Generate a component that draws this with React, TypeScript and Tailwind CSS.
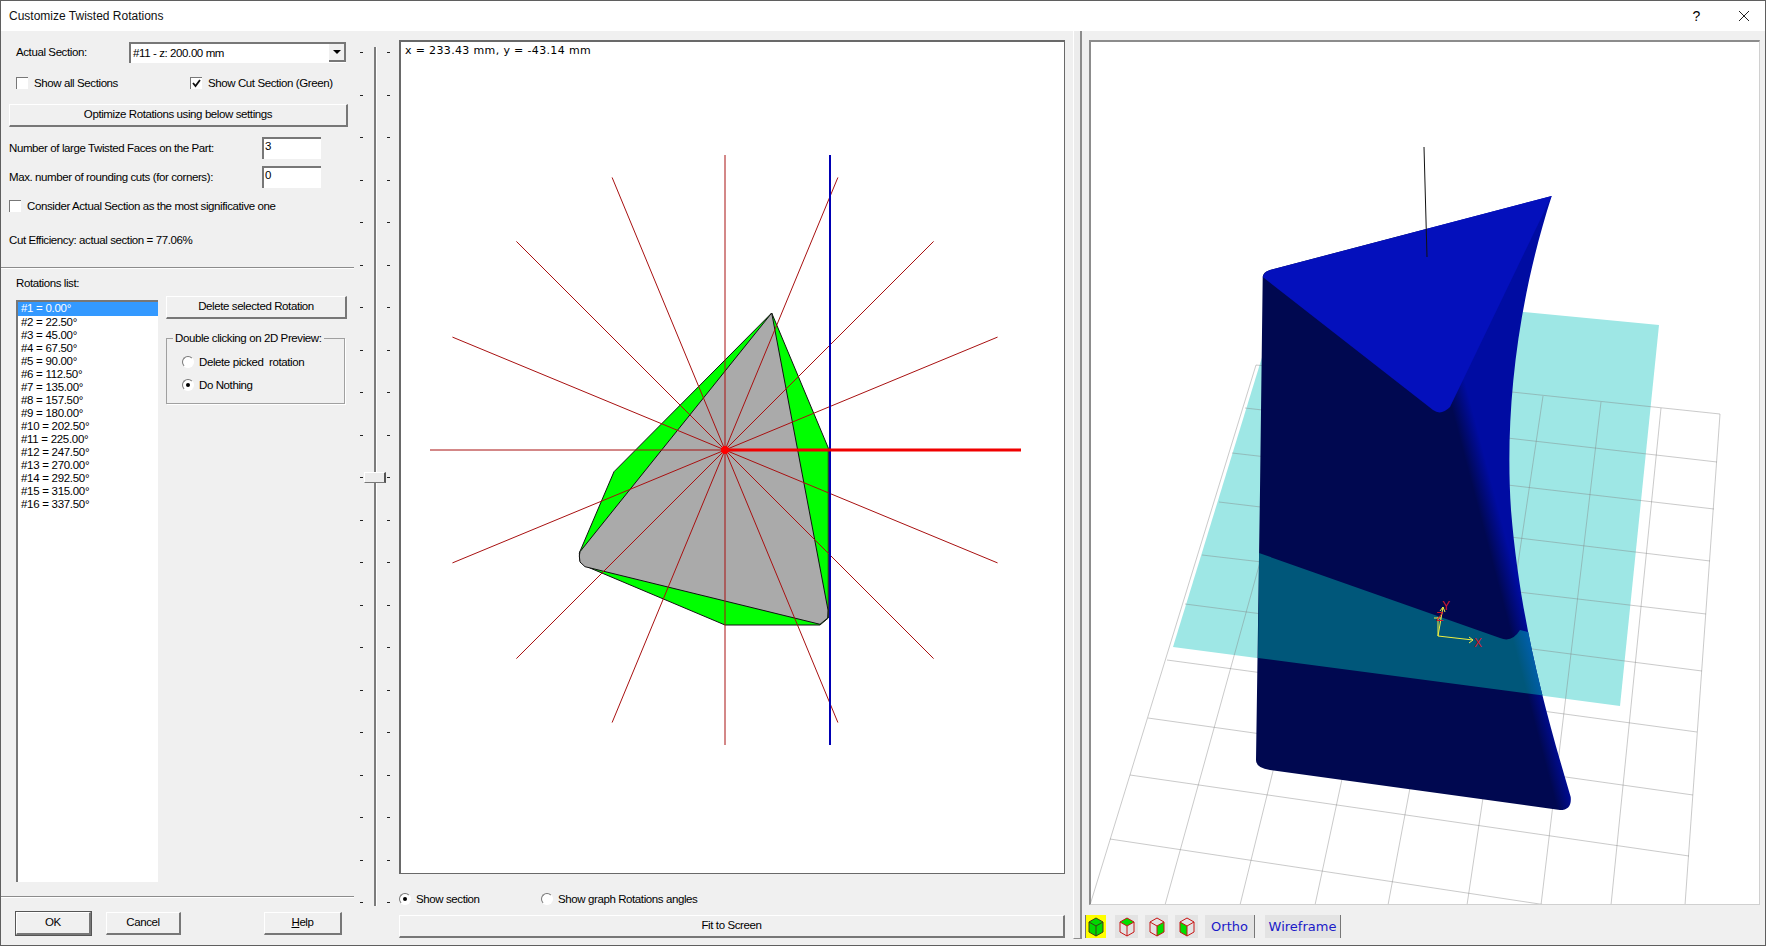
import React from 'react';

const rotations = ['0.00', '22.50', '45.00', '67.50', '90.00', '112.50', '135.00', '157.50', '180.00', '202.50', '225.00', '247.50', '270.00', '292.50', '315.00', '337.50'];
const ticks = Array.from({ length: 21 }, (_, i) => i);

// ends of the grid lines, read off the picture
const gridCols = [
  [1256, 365, 1090, 905], [1313, 371, 1165, 905], [1370, 377, 1240, 905], [1427, 383, 1315, 905], [1485, 389, 1388, 905],
  [1543, 396, 1467, 905], [1601, 402, 1541, 905], [1661, 408, 1611, 905], [1720, 414, 1685, 905],
];
const gridRows = [
  [1256, 365, 1720, 414], [1245, 408, 1717, 462], [1232, 453, 1714, 509], [1219, 502, 1710, 561], [1202, 555, 1706, 614],
  [1185, 604, 1702, 671], [1167, 660, 1697, 732], [1148, 718, 1693, 795], [1130, 775, 1689, 856], [1110, 839, 1685, 926],
];

function Tick() {
  return <div className="w-[3px] h-[1px] bg-[#222]" />;
}

function Btn({ label, className }: { label: React.ReactNode; className: string }) {
  return (
    <button className={`flex items-center justify-center bg-[#f0f0f0] border-t border-l border-white border-r-2 border-b-2 border-r-[#777] border-b-[#777] leading-none text-black ${className}`}>
      {label}
    </button>
  );
}

function Check({ checked, label, className }: { checked?: boolean; label: string; className?: string }) {
  return (
    <div className={`flex items-center h-[12px] ${className ?? ''}`}>
      <div className="w-[12px] h-[12px] bg-white border-t border-l border-t-[#777] border-l-[#777] shrink-0 flex items-center justify-center">
        {checked && (
          <svg width="9" height="9" viewBox="0 0 9 9">
            <path d="M1 4 L3.5 7 L8 1" fill="none" stroke="#111" strokeWidth="1.8" />
          </svg>
        )}
      </div>
      <span className="ml-[6px] whitespace-nowrap">{label}</span>
    </div>
  );
}

function Radio({ checked, label, className }: { checked?: boolean; label: string; className?: string }) {
  return (
    <div className={`flex items-center h-[12px] ${className ?? ''}`}>
      <div className="w-[12px] h-[12px] rounded-full bg-white border border-t-[#777] border-l-[#777] border-r-white border-b-white shrink-0 flex items-center justify-center">
        {checked && <div className="w-[4px] h-[4px] rounded-full bg-black" />}
      </div>
      <span className="ml-[5px] whitespace-pre">{label}</span>
    </div>
  );
}

function Cube({ kind }: { kind: 'all' | 'top' | 'right' | 'left' }) {
  const line = kind === 'all' ? '#3c3c1c' : '#c81414';
  return (
    <svg width="16" height="20" viewBox="0 0 16 20">
      <path d="M8 1 L15 5 L15 15 L8 19 L1 15 L1 5 Z" fill={kind === 'all' ? '#00d800' : 'none'} />
      {kind === 'top' && <path d="M8 1 L15 5 L8 9 L1 5 Z" fill="#00e000" />}
      {kind === 'right' && <path d="M15 5 L15 15 L8 19 L8 9 Z" fill="#00e000" />}
      {kind === 'left' && <path d="M1 5 L8 9 L8 19 L1 15 Z" fill="#00e000" />}
      <path d="M8 1 L15 5 L15 15 L8 19 L1 15 L1 5 Z M1 5 L8 9 L15 5 M8 9 L8 19" fill="none" stroke={line} strokeWidth="1" />
    </svg>
  );
}

function Section() {
  const cx = 725;
  const cy = 450;
  const r = 295;
  return (
    <svg className="block" width="663" height="831" viewBox="401 42 663 831">
      <path d="M771.7 313 L828.3 448 L828.3 618 L820 625 L725 625 L590 568 L580 561 L579.3 553 L614 471.7 Z" fill="#00ff00" stroke="#111" strokeWidth="1" />
      <path d="M771.7 313 L828 610 L827.7 618 L820 624.3 L585 566.7 L580 562 L579.3 556 L580 551.7 Z" fill="#aaaaaa" stroke="#111" strokeWidth="1" />
      {rotations.map((_, i) => {
        const a = (i * 22.5 * Math.PI) / 180;
        return <line key={i} x1={cx} y1={cy} x2={cx + r * Math.cos(a)} y2={cy - r * Math.sin(a)} stroke="#a81010" strokeWidth="1" />;
      })}
      <line x1="830" y1="155" x2="830" y2="745" stroke="#0000b4" strokeWidth="2" />
      <line x1={cx} y1={cy} x2={cx + r + 1} y2={cy} stroke="#f00000" strokeWidth="3" />
      <circle cx={cx} cy={cy} r="4" fill="#ff0000" />
    </svg>
  );
}

function Part() {
  const side = 'M1551.7 196 L1270 270 Q1263 272 1262.7 277 L1260 490 L1256 760 Q1256 768 1270 770 L1560 810 Q1572 810 1570.7 797 C1545 710 1520 620 1511 510 C1505 420 1515 310 1551.7 196 Z';
  return (
    <svg className="block" width="668" height="862" viewBox="1091 42 668 862">
      <defs>
        <linearGradient id="bodyShade" gradientUnits="userSpaceOnUse" x1="1453" y1="413" x2="1472" y2="408">
          <stop offset="0" stopColor="#000850" />
          <stop offset="1" stopColor="#000ca2" />
        </linearGradient>
        <linearGradient id="bandShade" gradientUnits="userSpaceOnUse" x1="1453" y1="413" x2="1472" y2="408">
          <stop offset="0" stopColor="#00577a" />
          <stop offset="1" stopColor="#0060b4" />
        </linearGradient>
        <clipPath id="bodyClip">
          <path d={side} />
        </clipPath>
      </defs>
      <path d="M1283 289 L1659 325 L1620 706 L1173 647 Z" fill="#9ee7e5" />
      {gridCols.map((g, i) => (
        <line key={i} x1={g[0]} y1={g[1]} x2={g[2]} y2={g[3]} stroke="#808080" strokeOpacity="0.42" strokeWidth="1" />
      ))}
      {gridRows.map((g, i) => (
        <line key={i} x1={g[0]} y1={g[1]} x2={g[2]} y2={g[3]} stroke="#808080" strokeOpacity="0.42" strokeWidth="1" />
      ))}
      <path d={side} fill="url(#bodyShade)" />
      <path d="M1259 553 L1500 638 Q1512 643 1520 630 L1570 642 L1570 699 L1258 658 Z" fill="url(#bandShade)" clipPath="url(#bodyClip)" />
      <path d="M1551.7 196 L1270 270 Q1264 272 1262.7 277 L1433 410 Q1441 416 1450 407 Z" fill="#0410bc" />
      <line x1="1424" y1="147" x2="1427" y2="257" stroke="#111" strokeWidth="1" />
      <path d="M1438 636 L1473 640 M1469 637 L1473 640 L1469 643 M1438 636 L1443 607 M1440 611 L1443 607 L1445 612 M1438 636 L1438 617 M1434 618 L1441 618" fill="none" stroke="#f0f040" strokeWidth="1" />
      <g fontFamily="'Liberation Sans', sans-serif" fontSize="12" fill="#d01828">
        <text x="1474" y="647">X</text>
        <text x="1442" y="610">Y</text>
        <text x="1436" y="621">Z</text>
      </g>
    </svg>
  );
}

export default function App() {
  return (
    <div className="w-[1766px] h-[946px] flex flex-col border border-[#5f5f5f] bg-[#f0f0f0] text-[11.5px] tracking-[-0.4px] leading-[14px] text-black overflow-hidden font-['Liberation_Sans',sans-serif]">
      {/* Title bar */}
      <div className="h-[30px] shrink-0 bg-white flex items-center pl-[8px]">
        <span className="text-[12px] tracking-normal text-[#111]">Customize Twisted Rotations</span>
        <span className="ml-auto text-[14px] mr-[38px]">?</span>
        <svg className="mr-[15px]" width="12" height="12" viewBox="0 0 12 12">
          <path d="M1 1 L11 11 M11 1 L1 11" stroke="#222" strokeWidth="1" />
        </svg>
      </div>

      <div className="flex flex-1 min-h-0">
        {/* Settings */}
        <div className="w-[353px] shrink-0 flex flex-col">
          <div className="flex items-center h-[20px] mt-[11px] ml-[15px]">
            <span className="w-[113px]">Actual Section:</span>
            <div className="w-[217px] h-[21px] bg-white border-t-2 border-l-2 border-t-[#777] border-l-[#777] flex items-center justify-between pl-[2px]">
              <span>#11 - z: 200.00 mm</span>
              <div className="w-[17px] h-[18px] bg-[#f0f0f0] border-r-2 border-b-2 border-r-[#777] border-b-[#777] flex items-center justify-center">
                <div className="w-0 h-0 border-x-[4px] border-x-transparent border-t-[4px] border-t-black" />
              </div>
            </div>
          </div>
          <div className="flex mt-[15px] ml-[15px]">
            <Check label="Show all Sections" className="w-[174px]" />
            <Check checked label="Show Cut Section (Green)" />
          </div>
          <Btn label="Optimize Rotations using below settings" className="w-[339px] h-[23px] mt-[15px] ml-[8px]" />
          <div className="flex items-center mt-[10px] ml-[8px] h-[22px]">
            <span className="w-[253px]">Number of large Twisted Faces on the Part:</span>
            <div className="w-[59px] h-[22px] bg-white border-t-2 border-l-2 border-t-[#777] border-l-[#777] pl-[1px]">3</div>
          </div>
          <div className="flex items-center mt-[7px] ml-[8px] h-[22px]">
            <span className="w-[253px]">Max. number of rounding cuts (for corners):</span>
            <div className="w-[59px] h-[22px] bg-white border-t-2 border-l-2 border-t-[#777] border-l-[#777] pl-[1px]">0</div>
          </div>
          <Check label="Consider Actual Section as the most significative one" className="mt-[12px] ml-[8px]" />
          <div className="mt-[21px] ml-[8px] h-[14px]">Cut Efficiency: actual section = 77.06%</div>
          <div className="mt-[20px] h-[2px] border-t border-t-[#8c8c8c] border-b border-b-white" />
          <div className="mt-[7px] ml-[15px] h-[14px]">Rotations list:</div>
          <div className="flex mt-[6px] ml-[15px]">
            <div className="w-[142px] h-[582px] mt-[4px] bg-white border-t-2 border-l-2 border-t-[#777] border-l-[#777] tracking-[-0.3px]">
              {rotations.map((r, i) => (
                <div key={r} className={`pl-[3px] leading-[12px] ${i === 0 ? 'bg-[#3399ff] text-white h-[14px]' : 'h-[13px]'}`}>
                  #{i + 1} = {r}°
                </div>
              ))}
            </div>
            <div className="ml-[8px] w-[181px]">
              <Btn label="Delete selected Rotation" className="w-[181px] h-[23px]" />
              <div className="relative mt-[19px] w-[179px] h-[66px] border border-[#a0a0a0] shadow-[1px_1px_0_#fff]">
                <span className="absolute -top-[8px] left-[6px] bg-[#f0f0f0] px-[2px] whitespace-nowrap">Double clicking on 2D Preview:</span>
                <Radio label="Delete picked  rotation" className="mt-[17px] ml-[15px]" />
                <Radio checked label="Do Nothing" className="mt-[11px] ml-[15px]" />
              </div>
            </div>
          </div>
          <div className="mt-[14px] h-[2px] border-t border-t-[#8c8c8c] border-b border-b-white" />
          <div className="flex mt-[14px] ml-[15px]">
            <Btn label="OK" className="w-[75px] h-[23px] outline outline-1 outline-[#555]" />
            <Btn label="Cancel" className="w-[75px] h-[23px] ml-[15px]" />
            <Btn label={<span><span className="underline">H</span>elp</span>} className="w-[78px] h-[23px] ml-[83px]" />
          </div>
        </div>

        {/* Section slider */}
        <div className="relative w-[45px] shrink-0 flex items-start">
          <div className="flex flex-col justify-between h-[851px] mt-[21px] ml-[6px]">
            {ticks.map((t) => <Tick key={t} />)}
          </div>
          <div className="w-[3px] h-[859px] mt-[16px] ml-[11px] border-l-2 border-l-[#7c7c7c] border-r border-r-white" />
          <div className="flex flex-col justify-between h-[851px] mt-[21px] ml-[10px]">
            {ticks.map((t) => <Tick key={t} />)}
          </div>
          <div className="absolute left-[10px] top-[441px] w-[22px] h-[11px] bg-[#ececec] border-t border-l border-white border-r-2 border-b border-r-[#555] border-b-[#777]" />
        </div>

        {/* 2D preview */}
        <div className="w-[666px] shrink-0 flex flex-col">
          <div className="relative mt-[9px] h-[834px] bg-white border-t-2 border-l-2 border-t-[#696969] border-l-[#696969] border-r border-b border-r-[#696969] border-b-[#696969]">
            <span className="absolute top-[2px] left-[4px] font-['DejaVu_Sans',sans-serif] text-[11px] tracking-[0.35px]">x = 233.43 mm, y = -43.14 mm</span>
            <Section />
          </div>
          <div className="flex mt-[19px]">
            <Radio checked label="Show section" className="w-[142px]" />
            <Radio label="Show graph Rotations angles" />
          </div>
          <Btn label="Fit to Screen" className="w-[666px] h-[23px] mt-[10px]" />
        </div>

        {/* Splitter */}
        <div className="w-[9px] shrink-0 ml-[8px] h-[908px] bg-[#ececec] border-l border-l-white border-r-2 border-r-[#8c8c8c] border-b border-b-[#8c8c8c]" />

        {/* 3D view */}
        <div className="w-[671px] shrink-0 ml-[7px] flex flex-col">
          <div className="mt-[9px] h-[865px] bg-white border-t-2 border-l-2 border-t-[#8c8c8c] border-l-[#8c8c8c] border-r border-b border-r-[#d0d0d0] border-b-[#d0d0d0] overflow-hidden">
            <Part />
          </div>
          <div className="flex items-stretch h-[23px] mt-[10px] -ml-[4px] text-[13px] tracking-normal text-[#1a1ac8] font-['DejaVu_Sans',sans-serif]">
            <div className="w-[21px] bg-[#ffff00] border-l border-l-[#777] flex items-center justify-center"><Cube kind="all" /></div>
            <div className="w-[23px] ml-[9px] bg-[#e3e3e3] flex items-center justify-center"><Cube kind="top" /></div>
            <div className="w-[23px] ml-[7px] bg-[#e3e3e3] flex items-center justify-center"><Cube kind="right" /></div>
            <div className="w-[23px] ml-[7px] bg-[#e3e3e3] flex items-center justify-center"><Cube kind="left" /></div>
            <div className="w-[50px] ml-[7px] bg-[#e3e3e3] border-r border-r-[#777] flex items-center justify-center">Ortho</div>
            <div className="w-[76px] ml-[10px] bg-[#e3e3e3] border-r border-r-[#777] flex items-center justify-center">Wireframe</div>
          </div>
        </div>
      </div>
    </div>
  );
}
